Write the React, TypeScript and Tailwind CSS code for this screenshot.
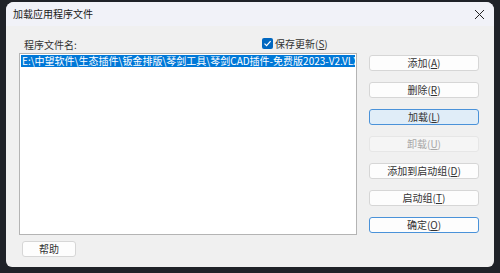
import React from "react";

const font = { fontFamily: '"Noto Sans CJK SC", "Liberation Sans", sans-serif' };

function Btn({
  label,
  k,
  variant = "normal",
}: {
  label: string;
  k?: string;
  variant?: "normal" | "focus" | "disabled" | "default";
}) {
  const cls =
    variant === "focus"
      ? "bg-[#e0edf8] border-[#4a92d9] text-[#333]"
      : variant === "disabled"
      ? "bg-[#f5f5f5] border-[#e6e6e6] text-[#a8a8a8]"
      : variant === "default"
      ? "bg-[#fdfdfd] border-[#4a92d9] text-[#333]"
      : "bg-[#fdfdfd] border-[#d6d6d6] text-[#333]";
  return (
    <div
      className={`h-[16px] w-[110px] border rounded-[3px] flex items-center justify-center text-[10px] leading-none ${cls}`}
    >
      <span>{label}</span>
      {k && (
        <span>
          (<span className="underline">{k}</span>)
        </span>
      )}
    </div>
  );
}

export default function App() {
  return (
    <div className="w-[500px] h-[273px] bg-[#1f2228] pt-[2px] pl-[6px]" style={font}>
      <div className="w-[488px] h-[265px] rounded-t-[8px] rounded-b-[6px] overflow-hidden bg-[#f0f0f0] flex flex-col">
        <div className="h-[24px] bg-[#f1f2f8] flex items-center justify-between pl-[7px] pr-[8px]">
          <span className="text-[10px] text-[#1a1a1a] leading-none">加载应用程序文件</span>
          <svg width="11" height="11" viewBox="0 0 11 11" className="mr-[1px]">
            <path d="M1 1 L10 10 M10 1 L1 10" stroke="#222" strokeWidth="1" />
          </svg>
        </div>
        <div className="flex flex-1">
          <div className="flex flex-col pl-[13px] w-[351px]">
            <div className="h-[27px] flex items-end pb-[3px] relative">
              <span className="ml-[5px] text-[10px] text-[#333] leading-none">程序文件名:</span>
              <div className="absolute left-[243px] top-[12px] flex items-center gap-[2px]">
                <div className="w-[11px] h-[11px] rounded-[2px] bg-[#0067c0] flex items-center justify-center">
                  <svg width="9" height="9" viewBox="0 0 9 9">
                    <path d="M1.5 4.6 L3.6 6.7 L7.6 2.2" stroke="#fff" strokeWidth="1.2" fill="none" />
                  </svg>
                </div>
                <span className="text-[10px] text-[#333] leading-none">
                  保存更新(<span className="underline">S</span>)
                </span>
              </div>
            </div>
            <div className="w-[338px] h-[182px] border border-[#b4b4b4] bg-white p-[1px]">
              <div className="h-[12px] bg-[#0078d7] text-white text-[10px] leading-[12px] whitespace-nowrap overflow-hidden pl-[1px]">
                E:\中望软件\生态插件\钣金排版\琴剑工具\琴剑CAD插件-免费版2023-V2.VLX
              </div>
            </div>
            <div className="mt-[6px] ml-[3px] w-[54px] h-[16px] bg-[#fdfdfd] border border-[#d6d6d6] rounded-[3px] flex items-center justify-center text-[10px] text-[#333] leading-none">
              帮助
            </div>
          </div>
          <div className="flex flex-col gap-[11px] pt-[29px] ml-[12px]">
            <Btn label="添加" k="A" />
            <Btn label="删除" k="R" />
            <Btn label="加载" k="L" variant="focus" />
            <Btn label="卸载" k="U" variant="disabled" />
            <Btn label="添加到启动组" k="D" />
            <Btn label="启动组" k="T" />
            <Btn label="确定" k="O" variant="default" />
          </div>
        </div>
      </div>
    </div>
  );
}
